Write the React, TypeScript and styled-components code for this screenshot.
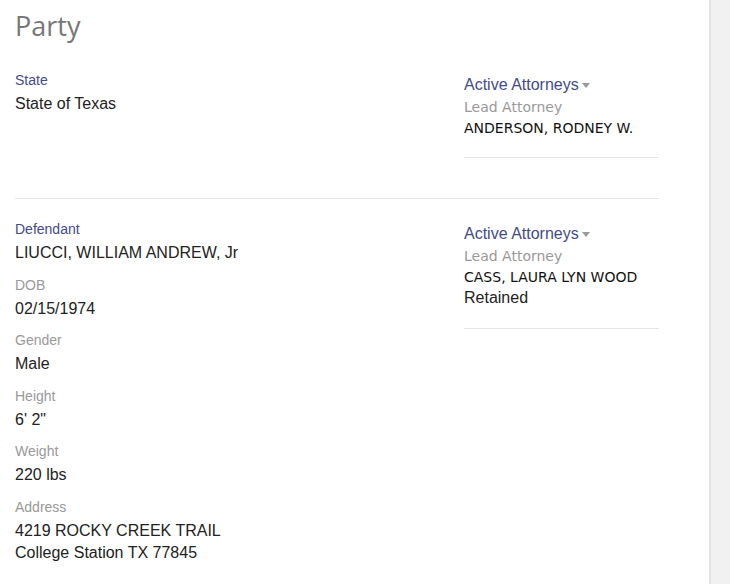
import React from 'react';
import styled, { createGlobalStyle } from 'styled-components';

const GlobalStyle = createGlobalStyle`
  html, body {
    margin: 0;
    padding: 0;
    background: #fff;
  }
  body {
    font-family: "Liberation Sans", Arial, sans-serif;
  }
`;

const Page = styled.div`
  display: flex;
  height: 100vh;
  overflow: hidden;
  background: #fff;
`;

const Main = styled.main`
  flex: 1;
  padding: 0 15px;
  overflow: hidden;
`;

const Content = styled.div`
  width: 644px;
`;

const ScrollTrack = styled.aside`
  width: 19px;
  flex-shrink: 0;
  background: #f1f1f1;
  border-left: 2px solid #e2e2e2;
`;

const Heading = styled.h2`
  margin: 10px 0 8px;
  font-family: "Open Sans", "Liberation Sans", sans-serif;
  font-weight: 400;
  font-size: 27px;
  line-height: 32px;
  color: #777;
`;

const PartyRow = styled.section`
  display: grid;
  grid-template-columns: 449px 1fr;
  padding: 21px 0;
  border-bottom: 1px solid #e6e6e6;
`;

const Details = styled.div`
  display: flex;
  flex-direction: column;
  gap: 11.6px;
`;

const Field = styled.div`
  display: flex;
  flex-direction: column;
`;

const Label = styled.div<{ $type?: boolean }>`
  font-size: 14px;
  line-height: 19px;
  margin-bottom: 3px;
  color: ${(p) => (p.$type ? '#3f4b8c' : '#999')};
`;

const Value = styled.div`
  font-size: 16px;
  line-height: 22px;
  color: #222;
`;

const Attorneys = styled.div`
  padding-top: 2px;
`;

const ToggleTitle = styled.div`
  font-size: 16px;
  line-height: 24px;
  color: #3f4b8c;
`;

const Caret = styled.span`
  display: inline-block;
  vertical-align: middle;
  margin-left: 3px;
  border-top: 5px solid #999;
  border-left: 4px solid transparent;
  border-right: 4px solid transparent;
`;

const AttorneyEntry = styled.div`
  padding-bottom: 19px;
  margin-bottom: 19px;
  border-bottom: 1px solid #e6e6e6;
`;

const Role = styled.div`
  font-family: "DejaVu Sans", Verdana, sans-serif;
  font-size: 14px;
  line-height: 21px;
  color: #999;
`;

const AttorneyName = styled.div`
  font-family: "DejaVu Sans", Verdana, sans-serif;
  font-size: 14px;
  line-height: 20px;
  color: #111;
`;

const Representation = styled.div`
  font-size: 16px;
  line-height: 22px;
  color: #222;
`;

interface PartyField {
  label: string;
  lines: string[];
}

interface Party {
  type: string;
  name: string;
  fields: PartyField[];
  attorney: { role: string; name: string; status?: string };
}

const parties: Party[] = [
  {
    type: 'State',
    name: 'State of Texas',
    fields: [],
    attorney: { role: 'Lead Attorney', name: 'ANDERSON, RODNEY W.' },
  },
  {
    type: 'Defendant',
    name: 'LIUCCI, WILLIAM ANDREW, Jr',
    fields: [
      { label: 'DOB', lines: ['02/15/1974'] },
      { label: 'Gender', lines: ['Male'] },
      { label: 'Height', lines: ['6\' 2"'] },
      { label: 'Weight', lines: ['220 lbs'] },
      { label: 'Address', lines: ['4219 ROCKY CREEK TRAIL', 'College Station TX 77845'] },
    ],
    attorney: { role: 'Lead Attorney', name: 'CASS, LAURA LYN WOOD', status: 'Retained' },
  },
];

export default function App() {
  return (
    <>
      <GlobalStyle />
      <Page>
        <Main>
          <Content>
            <Heading>Party</Heading>
            {parties.map((party) => (
              <PartyRow key={party.type}>
                <Details>
                  <Field>
                    <Label $type>{party.type}</Label>
                    <Value>{party.name}</Value>
                  </Field>
                  {party.fields.map((f) => (
                    <Field key={f.label}>
                      <Label>{f.label}</Label>
                      {f.lines.map((line) => (
                        <Value key={line}>{line}</Value>
                      ))}
                    </Field>
                  ))}
                </Details>
                <Attorneys>
                  <ToggleTitle>
                    Active Attorneys
                    <Caret />
                  </ToggleTitle>
                  <AttorneyEntry>
                    <Role>{party.attorney.role}</Role>
                    <AttorneyName>{party.attorney.name}</AttorneyName>
                    {party.attorney.status && (
                      <Representation>{party.attorney.status}</Representation>
                    )}
                  </AttorneyEntry>
                </Attorneys>
              </PartyRow>
            ))}
          </Content>
        </Main>
        <ScrollTrack />
      </Page>
    </>
  );
}
